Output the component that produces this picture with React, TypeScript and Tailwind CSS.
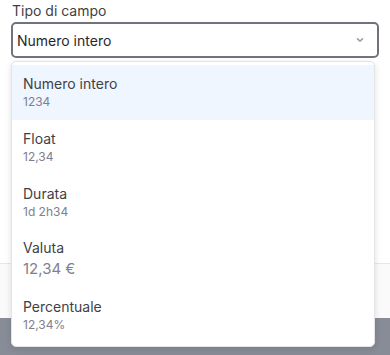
import React from "react";

const items = [
  { title: "Numero intero", sub: "1234", active: true, big: false },
  { title: "Float", sub: "12,34", active: false, big: false },
  { title: "Durata", sub: "1d 2h34", active: false, big: false },
  { title: "Valuta", sub: "12,34 €", active: false, big: true },
  { title: "Percentuale", sub: "12,34%", active: false, big: false },
];

export default function App() {
  return (
    <div className="relative w-[390px] h-[355px] overflow-hidden bg-white" style={{ fontFamily: "Inter, 'Noto Sans', sans-serif" }}>
      <div className="flex flex-col h-full">
        <div className="h-[263px] px-[11px] pt-[2px]">
          <div className="text-[14px] leading-[18px] text-[#3f3f46] pl-[1px]">Tipo di campo</div>
          <div className="mt-[2px] h-[36px] border-2 border-[#72727c] rounded-[5px] flex items-center justify-between pl-[4px] pr-[12px]">
            <span className="text-[14px] text-[#27272a]">Numero intero</span>
            <svg width="10" height="10" viewBox="0 0 10 10" fill="none" stroke="#a1a1aa" strokeWidth="1.6" strokeLinecap="round" strokeLinejoin="round">
              <path d="M2.5 3.8 L5 6.2 L7.5 3.8" />
            </svg>
          </div>
        </div>
        <div className="h-[55px] border-t border-[#e5e7eb] bg-[#fafafa]" />
        <div className="flex-1 bg-[#878c96]" />
      </div>

      <div className="absolute left-[11px] top-[61px] w-[364px] bg-white rounded-[5px] border border-[#e4e4e7] shadow-[0_2px_6px_rgba(0,0,0,0.12)] py-[3px]">
        {items.map((it) => (
          <div
            key={it.title}
            className={`flex flex-col justify-center px-[11px] ${it.big ? "h-[58px]" : "h-[55px]"} ${it.active ? "bg-[#eff6ff]" : "bg-white"}`}
          >
            <div className="text-[14px] leading-[18px] text-[#3f3f46]">{it.title}</div>
            <div className={`${it.big ? "text-[15px] leading-[21px] mt-[1px]" : "text-[12px] leading-[16px] mt-[1px]"} text-[#80808c]`}>{it.sub}</div>
          </div>
        ))}
      </div>
    </div>
  );
}
